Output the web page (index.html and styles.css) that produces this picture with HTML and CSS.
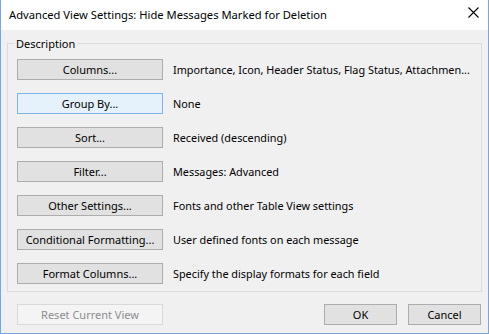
FILE: index.html
```html
<!DOCTYPE html>
<html>
<head>
<meta charset="utf-8">
<link rel="stylesheet" href="styles.css">
</head>
<body>
<div class="window">
  <div class="titlebar">
    <span class="title">Advanced View Settings: Hide Messages Marked for Deletion</span>
    <svg class="close" width="11" height="11" viewBox="0 0 11 11"><path d="M0.5 0.5 L10.5 10.5 M10.5 0.5 L0.5 10.5" stroke="#000" stroke-width="1.1" fill="none"/></svg>
  </div>
  <div class="content">
    <fieldset class="group">
      <legend>Description</legend>
      <div class="rows">
        <div class="row"><button class="btn wide">Columns...</button><span class="desc">Importance, Icon, Header Status, Flag Status, Attachmen...</span></div>
        <div class="row"><button class="btn wide focused">Group By...</button><span class="desc">None</span></div>
        <div class="row"><button class="btn wide">Sort...</button><span class="desc">Received (descending)</span></div>
        <div class="row"><button class="btn wide">Filter...</button><span class="desc">Messages: Advanced</span></div>
        <div class="row"><button class="btn wide">Other Settings...</button><span class="desc">Fonts and other Table View settings</span></div>
        <div class="row"><button class="btn wide">Conditional Formatting...</button><span class="desc">User defined fonts on each message</span></div>
        <div class="row"><button class="btn wide">Format Columns...</button><span class="desc">Specify the display formats for each field</span></div>
      </div>
    </fieldset>
    <div class="footer">
      <button class="btn wide disabled" disabled>Reset Current View</button>
      <div class="spacer"></div>
      <button class="btn small">OK</button>
      <button class="btn small cancel">Cancel</button>
    </div>
  </div>
</div>
</body>
</html>
```
FILE: styles.css
```css
html, body {
  margin: 0;
  padding: 0;
}
body {
  width: 489px;
  height: 334px;
  font-family: "Noto Sans", "Open Sans", sans-serif;
  font-size: 11px;
  color: #000;
}
.window {
  box-sizing: border-box;
  width: 489px;
  height: 334px;
  border: 1px solid #7aa6dc;
  border-top: none;
  background: #f0f0f0;
  display: flex;
  flex-direction: column;
}
.titlebar {
  height: 30px;
  flex: none;
  background: #fff;
  display: flex;
  align-items: center;
  padding-left: 8px;
  padding-right: 9px;
}
.title {
  flex: 1;
  white-space: nowrap;
  font-size: 11.2px;
  line-height: 16px;
  margin-top: -1px;
}
.close {
  display: block;
  margin-top: -6px;
}
.content {
  flex: 1;
  padding: 0 6px;
  display: flex;
  flex-direction: column;
}
.group {
  margin: 6px 0 0;
  border: 1px solid #dcdcdc;
  padding: 0;
  min-width: 0;
}
.group legend {
  margin-left: 6px;
  padding: 0 2px;
  line-height: 15px;
}
.rows {
  padding: 8px 0 7px 9px;
  display: flex;
  flex-direction: column;
  gap: 13px;
}
.row {
  display: flex;
  align-items: center;
  height: 21px;
}
.btn {
  box-sizing: border-box;
  flex-shrink: 0;
  height: 21px;
  border: 1px solid #adadad;
  background: #e1e1e1;
  font-family: inherit;
  font-size: 11px;
  color: #000;
  padding: 0;
  margin: 0;
  line-height: 19px;
}
.btn.wide {
  width: 146px;
}
.btn.small {
  width: 73px;
}
.btn.focused {
  border-color: #7eb4ea;
  background: #e5f1fb;
}
.btn.disabled {
  border-color: #d9d9d9;
  background: #f4f4f4;
  color: #8d8d8d;
}
.desc {
  margin-left: 10px;
  white-space: nowrap;
  font-size: 10.85px;
}
.footer {
  margin-top: 12px;
  padding-left: 10px;
  display: flex;
  gap: 11px;
}
.spacer {
  flex: 1;
}
.cancel {
  margin-right: 1px;
}
```
